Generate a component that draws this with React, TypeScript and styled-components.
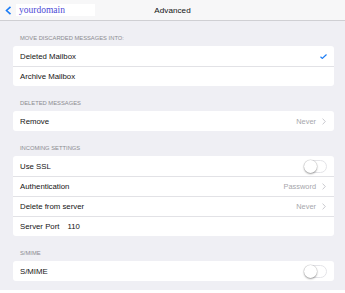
import React from "react";
import styled, { createGlobalStyle } from "styled-components";

const Global = createGlobalStyle`
  html, body { margin: 0; padding: 0; background: #ffffff; }
  body { font-family: "Liberation Sans", Arial, sans-serif; -webkit-font-smoothing: antialiased; }
  * { box-sizing: border-box; }
`;

const Page = styled.div`
  width: 345px;
  height: 293px;
  display: flex;
  flex-direction: column;
  background: #ffffff;
`;

const NavBar = styled.div`
  height: 21px;
  flex: none;
  background: #f7f7f8;
  border-bottom: 1px solid #cfcfd3;
  display: grid;
  grid-template-columns: 1fr auto 1fr;
  align-items: center;
`;

const BackArea = styled.div`
  display: flex;
  align-items: center;
  padding-left: 5px;
  gap: 4px;
`;

const DomainBox = styled.div`
  width: 79px;
  height: 12px;
  background: #ffffff;
  display: flex;
  align-items: center;
  padding-left: 3px;
  font-family: "Liberation Serif", "Times New Roman", serif;
  font-size: 9.5px;
  color: #4d4ad6;
  line-height: 12px;
`;

const Title = styled.div`
  font-size: 8.1px;
  color: #111;
  letter-spacing: 0.05px;
`;

const Content = styled.div`
  background: #efeff4;
  height: 269px;
  flex: none;
  padding: 0 11px 0 13px;
`;

const SectionHeader = styled.div`
  height: 25px;
  display: flex;
  align-items: flex-end;
  padding: 0 0 4px 7px;
  font-size: 5.8px;
  line-height: 7px;
  color: #8c8c91;
  text-transform: uppercase;
`;

const Card = styled.div`
  background: #ffffff;
  border-radius: 3px;
  overflow: hidden;
`;

const Row = styled.div`
  height: 20px;
  display: flex;
  align-items: center;
  padding: 0 7px;
  font-size: 7.8px;
  color: #141414;
  & + & { border-top: 1px solid #e2e2e6; }
`;

const Label = styled.span`
  flex: 1;
  white-space: nowrap;
`;

const PortValue = styled.span`
  margin-left: 8px;
`;

const Value = styled.span`
  font-size: 7.4px;
  color: #a6a6ab;
  margin-right: 6px;
`;

const Toggle = styled.div`
  width: 23px;
  height: 13px;
  border-radius: 7px;
  border: 1px solid #e4e4e8;
  background: #fff;
  position: relative;
`;

const Knob = styled.div`
  position: absolute;
  left: -1px;
  top: -1px;
  width: 13px;
  height: 13px;
  border-radius: 50%;
  background: #fff;
  box-shadow: 0 1px 2px rgba(0, 0, 0, 0.35), 0 0 0 0.5px rgba(0, 0, 0, 0.12);
`;

const Chevron = () => (
  <svg width="4" height="7" viewBox="0 0 4 7" style={{ marginRight: 1 }}>
    <polyline points="0.6,0.6 3.3,3.5 0.6,6.4" fill="none" stroke="#c4c4c9" strokeWidth="0.9" />
  </svg>
);

const Check = () => (
  <svg width="7" height="5" viewBox="0 0 7 5">
    <polyline points="0.5,2.8 2.3,4.4 6.5,0.5" fill="none" stroke="#1b7cf4" strokeWidth="1.2" />
  </svg>
);

const Switch = () => (
  <Toggle>
    <Knob />
  </Toggle>
);

export default function App() {
  return (
    <>
      <Global />
      <Page>
        <NavBar>
          <BackArea>
            <svg width="7" height="9" viewBox="0 0 7 9">
              <polyline points="5.5,0.8 1.5,4.5 5.5,8.2" fill="none" stroke="#1a7cf6" strokeWidth="1.6" />
            </svg>
            <DomainBox>yourdomain</DomainBox>
          </BackArea>
          <Title>Advanced</Title>
          <div />
        </NavBar>
        <Content>
          <SectionHeader>Move discarded messages into:</SectionHeader>
          <Card>
            <Row>
              <Label>Deleted Mailbox</Label>
              <Check />
            </Row>
            <Row>
              <Label>Archive Mailbox</Label>
            </Row>
          </Card>
          <SectionHeader>Deleted messages</SectionHeader>
          <Card>
            <Row>
              <Label>Remove</Label>
              <Value>Never</Value>
              <Chevron />
            </Row>
          </Card>
          <SectionHeader>Incoming settings</SectionHeader>
          <Card>
            <Row>
              <Label>Use SSL</Label>
              <Switch />
            </Row>
            <Row>
              <Label>Authentication</Label>
              <Value>Password</Value>
              <Chevron />
            </Row>
            <Row>
              <Label>Delete from server</Label>
              <Value>Never</Value>
              <Chevron />
            </Row>
            <Row>
              <Label>
                Server Port<PortValue>110</PortValue>
              </Label>
            </Row>
          </Card>
          <SectionHeader>S/MIME</SectionHeader>
          <Card>
            <Row>
              <Label>S/MIME</Label>
              <Switch />
            </Row>
          </Card>
        </Content>
      </Page>
    </>
  );
}
